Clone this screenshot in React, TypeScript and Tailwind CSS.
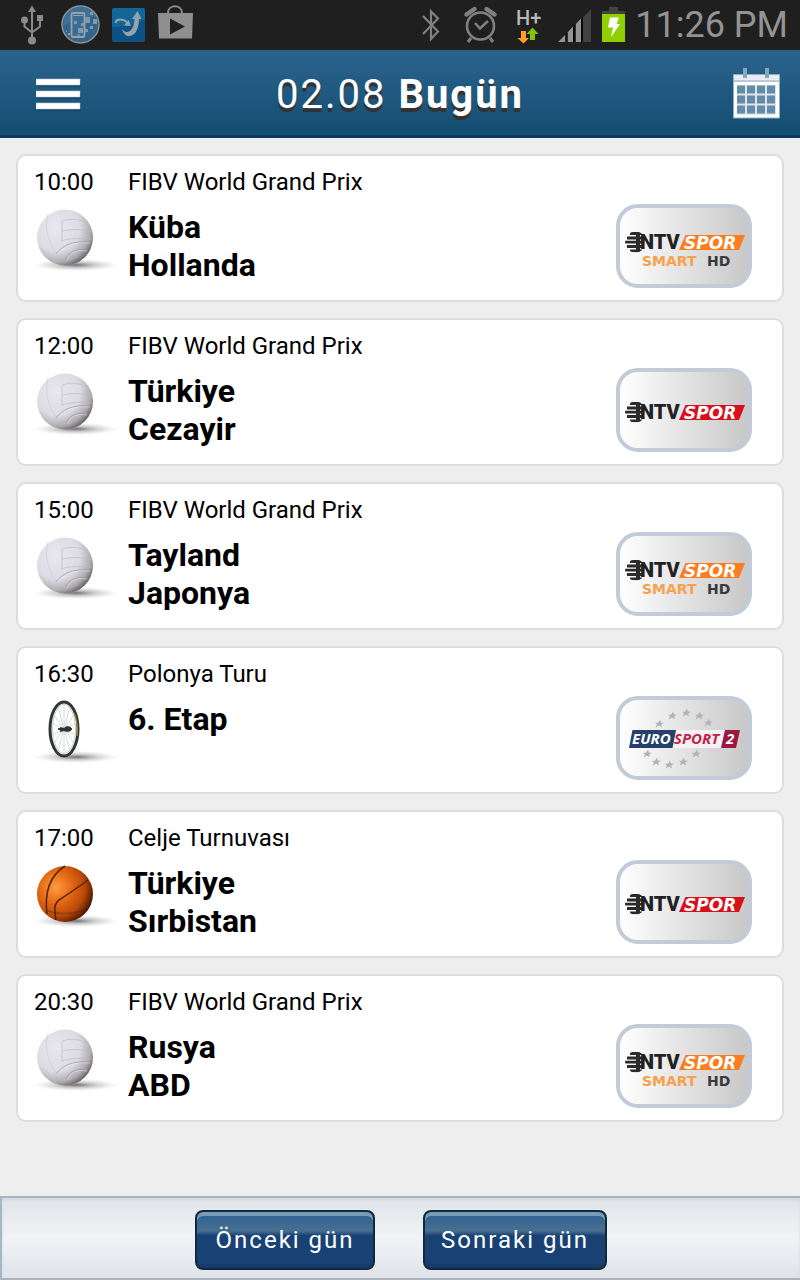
import { useId } from "react";

type Sport = "volleyball" | "cycling" | "basketball";
type Channel = "ntvspor" | "ntvsporhd" | "eurosport2";

interface Match {
  time: string;
  league: string;
  teams: string[];
  sport: Sport;
  channel: Channel;
}

const matches: Match[] = [
  { time: "10:00", league: "FIBV World Grand Prix", teams: ["Küba", "Hollanda"], sport: "volleyball", channel: "ntvsporhd" },
  { time: "12:00", league: "FIBV World Grand Prix", teams: ["Türkiye", "Cezayir"], sport: "volleyball", channel: "ntvspor" },
  { time: "15:00", league: "FIBV World Grand Prix", teams: ["Tayland", "Japonya"], sport: "volleyball", channel: "ntvsporhd" },
  { time: "16:30", league: "Polonya Turu", teams: ["6. Etap"], sport: "cycling", channel: "eurosport2" },
  { time: "17:00", league: "Celje Turnuvası", teams: ["Türkiye", "Sırbistan"], sport: "basketball", channel: "ntvspor" },
  { time: "20:30", league: "FIBV World Grand Prix", teams: ["Rusya", "ABD"], sport: "volleyball", channel: "ntvsporhd" },
];

function StatusBar() {
  return (
    <div className="flex h-[50px] items-center justify-between bg-[#1f1f1f] pr-3 pl-5">
      <div className="flex items-center gap-3">
        {/* USB */}
        <svg width="28" height="50" viewBox="0 0 28 50" fill="none" stroke="#8b8b8b" strokeWidth="2">
          <path d="M12 10v30M4.500 21v5.500l7.500 6M20 20v6.500l-8 6" />
          <path d="M12 5.500l4 6.500H8z" fill="#8b8b8b" stroke="none" />
          <circle cx="4.500" cy="20" r="3.500" fill="#8b8b8b" stroke="none" />
          <rect x="17" y="15" width="6" height="6" fill="#8b8b8b" stroke="none" />
          <circle cx="12" cy="40.500" r="4" fill="#8b8b8b" stroke="none" />
        </svg>
        {/* Phone transfer */}
        <svg width="40" height="50" viewBox="0 0 40 50">
          <circle cx="20.500" cy="24.500" r="18.500" fill="#33648a" stroke="#8c9499" strokeWidth="1.500" />
          <path d="M4 17a18 18 0 0 1 33 0c-9-3-23 4-33 8z" fill="#5286ad" opacity=".35" />
          <rect x="11.500" y="13" width="13" height="24" rx="1.500" fill="#3a6d95" stroke="#9aa2a8" strokeWidth="1.800" />
          <path d="M13 15.500h10M17 35h3" stroke="#9aa2a8" strokeWidth="1" />
          <path d="M25 17h5v6h-5zM30 12h3v3h-3zM33 19h4v5h-4zM18 28h5v5h-5zM25 29h3v3h-3zM30 26h3v3h-3zM14 21h3v3h-3zM21 23h3v3h-3z" fill="#809aab" />
          <path d="M8 33h2v2H8zM6 31h1v1H6z" fill="#8da7b8" />
        </svg>
        {/* Kies */}
        <svg width="33" height="50" viewBox="0 0 33 50">
          <rect y="8" width="33" height="34" rx="2" fill="#0c5285" />
          <path d="M0 10a2 2 0 0 1 2-2h29a2 2 0 0 1 2 2v9C23 25 12 27 0 27z" fill="#146698" />
          <path d="M3.500 23c1-5 8-4 12-.5" fill="none" stroke="#91a4ae" strokeWidth="2" />
          <path d="M19 26l-7-.5 4.500-5.500z" fill="#91a4ae" />
          <path d="M10 29c4 6 12 3 12.500-10H20l5.500-8 4 8h-2.500c0 19-14 22-17 10z" fill="#91a4ae" />
        </svg>
        {/* Play store */}
        <svg width="36" height="50" viewBox="0 0 36 50">
          <path d="M11 13c0-9 14-9 14 0" fill="none" stroke="#8b8b8b" strokeWidth="2" />
          <path d="M1 13h35l-1 25.500H2z" fill="#8f8f8f" />
          <path d="M13 18.500v16l15-8z" fill="#1f1f1f" />
        </svg>
      </div>
      <div className="flex items-center gap-2.5">
        {/* Bluetooth */}
        <svg width="38" height="50" viewBox="0 0 38 50" fill="none" stroke="#808080" strokeWidth="2.200">
          <path d="M8 16l15 15.500-7 7.500V11.500l7 7L8 34" />
        </svg>
        {/* Alarm */}
        <svg width="40" height="50" viewBox="0 0 40 50" fill="none" stroke="#808080">
          <circle cx="17.500" cy="26" r="13.500" strokeWidth="2.600" />
          <path d="M12 23l5 5.500 8-7.500" strokeWidth="2.500" />
          <path d="M3.500 14.500l8-5.500M23.500 9l8 5.500" strokeWidth="4.500" strokeLinecap="round" />
          <path d="M8 38l-3 4M27 38l3 4" strokeWidth="3" />
        </svg>
        {/* Mobile data */}
        <svg width="34" height="50" viewBox="0 0 34 50">
          <text x="3" y="24.500" className="font-['Roboto'] text-[20px] font-medium" fill="#b8b8b8">H+</text>
          <path d="M8 31h5v7h3l-5.500 5.500L4.500 38H8z" fill="#ff9c2b" />
          <path d="M17 40v-6h-3.500l6-6.500 6 6.500H22v6z" fill="#83c408" />
        </svg>
        {/* Signal */}
        <svg width="34" height="50" viewBox="0 0 34 50">
          <path d="M26 17.500L34 9v33h-8z" fill="#424242" />
          <path d="M1 42L8.500 34.500V42zM10.500 42v-9.500L16 26.500V42zM18.500 42V24.500l5.500-6V42z" fill="#949494" />
          <path d="M8.500 42v-7.500l2-2V42zM16 42V26.500l2.500-2.500v18zM24 42V19l2-2v25z" fill="#090909" />
        </svg>
        {/* Battery */}
        <svg width="24" height="50" viewBox="0 0 24 50">
          <path d="M1 14v-3h7V7h9v4h7v3z" fill="#424242" />
          <path d="M1 14h23v28H1z" fill="#91d000" />
          <path d="M9 17.500h9L15.500 24H19L10 37l2-9.500H7z" fill="#fff" />
        </svg>
        <span className="font-['Roboto'] text-[36px] leading-[50px] text-[#939393]">11:26 PM</span>
      </div>
    </div>
  );
}

function CalendarIcon() {
  return (
    <svg width="48" height="52" viewBox="0 0 48 52">
      <path d="M1.500 7.500h46V51h-46z" fill="#fff" stroke="#8fafc5" strokeWidth="1" />
      <path d="M2 8h45v5H2z" fill="#e6ecf1" />
      <path d="M2 13h45v2H2z" fill="#b9cbd8" />
      <path d="M11 1h4v10h-4zM33 1h4v10h-4z" fill="#86a6bb" />
      <path d="M5 18h39v30H5z" fill="#dde6ed" />
      {[0, 1, 2].map((row) =>
        [0, 1, 2, 3].map((col) => (
          <rect key={`${row}-${col}`} x={5 + col * 10} y={18.5 + row * 10} width="8" height="8" fill="#648ba7" />
        )),
      )}
    </svg>
  );
}

function SportIcon({ sport }: { sport: Sport }) {
  const id = useId();
  return (
    <svg width="86" height="72" viewBox="0 0 86 72" className="mt-2 block" aria-hidden="true">
      <defs>
        <radialGradient id={`${id}s`}>
          <stop offset="0" stopColor="#333" stopOpacity=".7" />
          <stop offset=".45" stopColor="#555" stopOpacity=".3" />
          <stop offset="1" stopColor="#888" stopOpacity="0" />
        </radialGradient>
        <radialGradient id={`${id}v`} cx=".34" cy=".32" r=".78">
          <stop offset="0" stopColor="#e9e8f1" />
          <stop offset=".55" stopColor="#dcdbe3" />
          <stop offset=".8" stopColor="#aeacb0" />
          <stop offset="1" stopColor="#4c494d" />
        </radialGradient>
        <radialGradient id={`${id}b`} cx=".33" cy=".38" r=".7">
          <stop offset="0" stopColor="#ff9c42" />
          <stop offset=".4" stopColor="#e56a16" />
          <stop offset=".75" stopColor="#b84808" />
          <stop offset="1" stopColor="#4b1700" />
        </radialGradient>
      </defs>
      <ellipse cx="42" cy="61" rx="42" ry="6" fill={`url(#${id}s)`} />
      {sport === "volleyball" && (
        <>
          <circle cx="31" cy="33.500" r="28" fill={`url(#${id}v)`} />
          <g fill="none" strokeWidth="1">
            <path d="M28 17c9-3 19-2 26 3M28 27c10-2 20-2 30 1M28 17v20M27 37c10-3 20-3 31-2" stroke="#bebcc5" opacity=".7" />
            <path d="M22 50c8-10 17-13 34-12M32 55c3-7 10-11 22-9" stroke="#98969b" opacity=".7" />
            <path d="M23 51c8-10 17-13 33-12M33 56c3-7 9-11 20-9" stroke="#eceaee" opacity=".5" />
            <path d="M6 44c7 2 12 7 15 14M14 10c-3 12-2 24 8 39" stroke="#cac8d1" opacity=".6" />
          </g>
        </>
      )}
      {sport === "basketball" && (
        <>
          <circle cx="31" cy="34" r="28" fill={`url(#${id}b)`} />
          <g fill="none" stroke="#542206" strokeWidth="1.500">
            <path d="M31 6C17 15 10 30 13 54" />
            <path d="M54 20C43 28 33 35 25 40c-5 4-5 8-3 20" />
            <path d="M14 51c12 4 27 3 39-2" strokeWidth="1" opacity=".6" />
          </g>
        </>
      )}
      {sport === "cycling" && (
        <>
          <ellipse cx="30" cy="33" rx="14" ry="27" fill="#fff" fillOpacity=".9" stroke="#303536" strokeWidth="3" />
          <ellipse cx="30" cy="33" rx="11.500" ry="24.500" fill="none" stroke="#b5b8b8" strokeWidth=".7" />
          <g stroke="#c6c8c8" strokeWidth=".7">
            <path d="M30 8v50M24 11l12 44M36 11L24 55M20 19l20 28M40 19L20 47M18 27l24 12M42 27L18 39" />
          </g>
          <path d="M40 17c3 7 4 15 3 23" fill="none" stroke="#a28a45" strokeWidth="1.300" />
          <path d="M24 33h14" stroke="#3b3d3e" strokeWidth="2" />
          <path d="M26 31l4 1 3-2 4 1v4l-4 1-3-1-4 1z" fill="#303233" />
        </>
      )}
    </svg>
  );
}

function NtvSpor({ color }: { color: string }) {
  const id = useId();
  return (
    <>
      <clipPath id={id}>
        <circle cx="15.500" cy="34" r="10.500" />
      </clipPath>
      <g clipPath={`url(#${id})`} stroke="#2a2a2a" strokeWidth="2.800">
        <path d="M10 25.500h13M7 30h15M5 34.200h18M7 38.500h16M10 42.800h12" />
        <path d="M18 26v17" strokeWidth="4" />
      </g>
      <text x="20" y="41" className="font-['Roboto'] text-[20px] font-black" fill="#222">NTV</text>
      <path d="M65.500 27H125l-6 15H59z" fill={color} />
      <text x="64" y="40.500" className="font-['DejaVu_Sans'] text-[17px] font-bold italic" fill="#fff">SPOR</text>
    </>
  );
}

const starPositions = [
  [39, 24], [52, 16], [66, 13], [79, 16], [88, 23],
  [27, 54], [36, 62], [49, 65], [63, 62], [76, 54],
];

function ChannelLogo({ channel }: { channel: Channel }) {
  return (
    <div className="mt-9 mr-[30px] h-[84px] w-[136px] shrink-0 overflow-hidden rounded-[22px] border-4 border-[#c2cbd7] bg-linear-to-r from-white to-[#c8c8c8]">
      <svg width="128" height="76" viewBox="0 0 128 76">
        {channel === "ntvspor" && (
          <g transform="translate(0 6)">
            <NtvSpor color="#d8101c" />
          </g>
        )}
        {channel === "ntvsporhd" && (
          <>
            <NtvSpor color="#fb7d1e" />
            <text x="22" y="57.500" className="font-['DejaVu_Sans'] text-[14px] font-bold" fill="#f9a04c">SMART</text>
            <text x="87" y="57.500" className="font-['DejaVu_Sans'] text-[14px] font-bold" fill="#3a3a3c">HD</text>
          </>
        )}
        {channel === "eurosport2" && (
          <>
            {starPositions.map(([x, y]) => (
              <path
                key={`${x}-${y}`}
                transform={`translate(${x} ${y})`}
                d="M1-4.500l.8 3 3.200.2-2.700 1.700.5 3.200L0 1.600l-3.300 2 1.200-3.200L-4-1.300l3 .1z"
                fill="#b0b3b7"
              />
            ))}
            <path d="M56 30h49l-4 18H52z" fill="#f3f1f3" />
            <path d="M12.500 30H56l-3.500 18H9z" fill="#26406c" />
            <path d="M105 30h15l-4 18h-15z" fill="#9d1840" />
            <text x="12" y="44" className="font-['Open_Sans'] text-[15px] font-bold italic" fill="#fff">EURO</text>
            <text x="54" y="44" className="font-['Open_Sans'] text-[15px] font-bold italic" fill="#c31f48">SPORT</text>
            <text x="106" y="44" className="font-['Open_Sans'] text-[15px] font-bold italic" fill="#fff">2</text>
          </>
        )}
      </svg>
    </div>
  );
}

function MatchCard({ match }: { match: Match }) {
  return (
    <li className="flex rounded-[10px] border-2 border-[#dddddd] bg-white pt-3 pb-3 pl-4">
      <div className="w-[94px] shrink-0">
        <time className="block text-[24px] leading-7">{match.time}</time>
        <SportIcon sport={match.sport} />
      </div>
      <div className="min-w-0 flex-1">
        <p className="text-[24px] leading-7">{match.league}</p>
        <h2 className="mt-3 text-[32px] leading-[38px] font-bold">
          {match.teams.map((team) => (
            <span key={team} className="block">{team}</span>
          ))}
        </h2>
      </div>
      <ChannelLogo channel={match.channel} />
    </li>
  );
}

function DayButton({ label }: { label: string }) {
  return (
    <button
      type="button"
      className="h-[60px] min-w-[180px] rounded-lg border-2 border-[#102a3d] bg-linear-to-b from-[#356594] from-10% via-[#486f90] via-34% to-[#184274] to-42% px-4 text-[24px] tracking-[2px] text-white shadow-[inset_0_4px_0_#7a9aba,inset_0_-4px_0_#173c69]"
    >
      {label}
    </button>
  );
}

export default function App() {
  return (
    <div className="flex min-h-screen flex-col bg-[#eeeeee] font-['Roboto',sans-serif] text-black">
      <StatusBar />
      <header className="grid h-[88px] grid-cols-[1fr_auto_1fr] items-center border-b-3 border-[#0c3961] bg-linear-to-b from-[#2a628d] via-[#20597f] to-[#124d72] px-5 pt-1">
        <button type="button" aria-label="Menü" className="ml-4 w-[45px] justify-self-start">
          <svg width="45" height="34" viewBox="0 0 45 34">
            <path d="M0 3h45v6H0zM0 15h45v6H0zM0 27h45v6H0z" fill="#0e3c5d" opacity=".6" />
            <path d="M0 1h44v6H0zM0 13h44v6H0zM0 25h44v6H0z" fill="#fff" stroke="#b6c8d6" strokeWidth=".6" />
          </svg>
        </button>
        <h1 className="text-[40px] leading-[48px] tracking-wider text-white [text-shadow:0_4px_0_#333]">
          02.08 <b>Bugün</b>
        </h1>
        <button type="button" aria-label="Takvim" className="mb-1 justify-self-end">
          <CalendarIcon />
        </button>
      </header>
      <main className="flex-1 p-4">
        <ul className="flex flex-col gap-4">
          {matches.map((match) => (
            <MatchCard key={match.time} match={match} />
          ))}
        </ul>
      </main>
      <footer className="flex justify-center gap-12 border-2 border-r-0 border-[#abb4c1] bg-linear-to-b from-[#e0e4e8] via-[#f1f3f6] to-[#dfe3e9] pt-3 pb-2 shadow-[inset_0_2px_3px_#d3d8df]">
        <DayButton label="Önceki gün" />
        <DayButton label="Sonraki gün" />
      </footer>
    </div>
  );
}
